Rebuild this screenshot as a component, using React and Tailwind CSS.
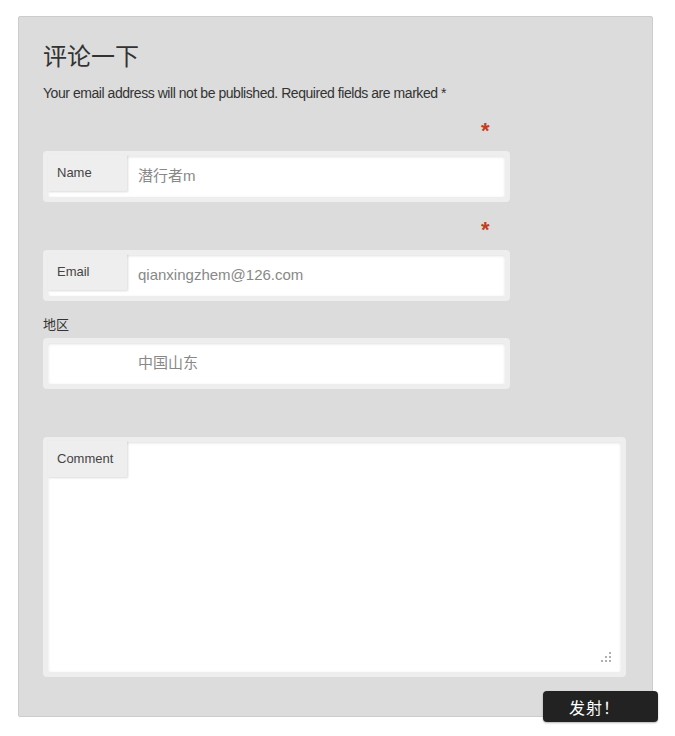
import React from "react";

const FONT = { fontFamily: '"Liberation Sans", Arial, "Noto Sans CJK SC", sans-serif' };

function Field({ label, value }) {
  return (
    <div className="w-[467px] rounded-[4px] bg-[#eeeeee] p-[5px]">
      <div className="relative flex h-[41px] items-center rounded-[2px] bg-white pl-[90px] text-[15px] text-[#888888] shadow-[inset_0_1px_3px_rgba(0,0,0,0.12)]">
        {label && (
          <div className="absolute left-0 top-[-1px] flex h-[36px] w-[79px] items-center bg-[#eeeeee] pl-[9px] text-[13px] text-[#444444] shadow-[1px_1px_2px_rgba(0,0,0,0.15)]">
            {label}
          </div>
        )}
        <span>{value}</span>
      </div>
    </div>
  );
}

function Star() {
  return (
    <div className="h-[22px] pl-[438px] text-[22px] font-bold leading-[22px] text-[#c43b1d]">*</div>
  );
}

export default function App() {
  return (
    <div className="min-h-[736px] bg-white pl-[18px] pt-[16px]" style={FONT}>
      <div className="h-[701px] w-[635px] rounded-[2px] border border-[#cccccc] bg-[#dcdcdc] pl-[24px] pt-[23px]">
        <div
          className="text-[24px] font-normal leading-[30px] text-[#333333]"
          style={{ fontFamily: '"Noto Sans CJK SC", serif' }}
        >
          评论一下
        </div>
        <div className="mt-[13px] text-[14px] tracking-[-0.45px] leading-[20px] text-[#333333]">
          Your email address will not be published. Required fields are marked *
        </div>
        <div className="mt-[17px]">
          <Star />
        </div>
        <div className="mt-[9px]">
          <Field label="Name" value="潜行者m" />
        </div>
        <div className="mt-[17px]">
          <Star />
        </div>
        <div className="mt-[9px]">
          <Field label="Email" value="qianxingzhem@126.com" />
        </div>
        <div className="mt-[15px] text-[13px] leading-[18px] text-[#333333]">地区</div>
        <div className="mt-[4px]">
          <Field label={null} value="中国山东" />
        </div>
        <div className="mt-[48px] w-[583px] rounded-[4px] bg-[#eeeeee] p-[5px]">
          <div className="relative h-[230px] rounded-[2px] bg-white shadow-[inset_0_1px_3px_rgba(0,0,0,0.12)]">
            <div className="absolute left-0 top-[-1px] flex h-[36px] w-[79px] items-center bg-[#eeeeee] pl-[9px] text-[13px] text-[#444444] shadow-[1px_1px_2px_rgba(0,0,0,0.15)]">
              Comment
            </div>
            <svg className="absolute bottom-[9px] right-[9px]" width="12" height="12" viewBox="0 0 12 12">
              <rect x="9" y="1" width="2" height="2" fill="#b0b0b0" />
              <rect x="5" y="5" width="2" height="2" fill="#b0b0b0" />
              <rect x="9" y="5" width="2" height="2" fill="#b0b0b0" />
              <rect x="1" y="9" width="2" height="2" fill="#b0b0b0" />
              <rect x="5" y="9" width="2" height="2" fill="#b0b0b0" />
              <rect x="9" y="9" width="2" height="2" fill="#b0b0b0" />
            </svg>
          </div>
        </div>
      </div>
      <div
        className="ml-[525px] mt-[-26px] flex h-[31px] w-[115px] items-center rounded-[4px] bg-[#222222] pl-[26px] text-[16px] font-normal tracking-[1px] text-white shadow-[0_1px_2px_rgba(0,0,0,0.3)]"
        style={{ fontFamily: '"Noto Sans CJK SC", sans-serif', fontWeight: 400 }}
      >
        发射！
      </div>
    </div>
  );
}
